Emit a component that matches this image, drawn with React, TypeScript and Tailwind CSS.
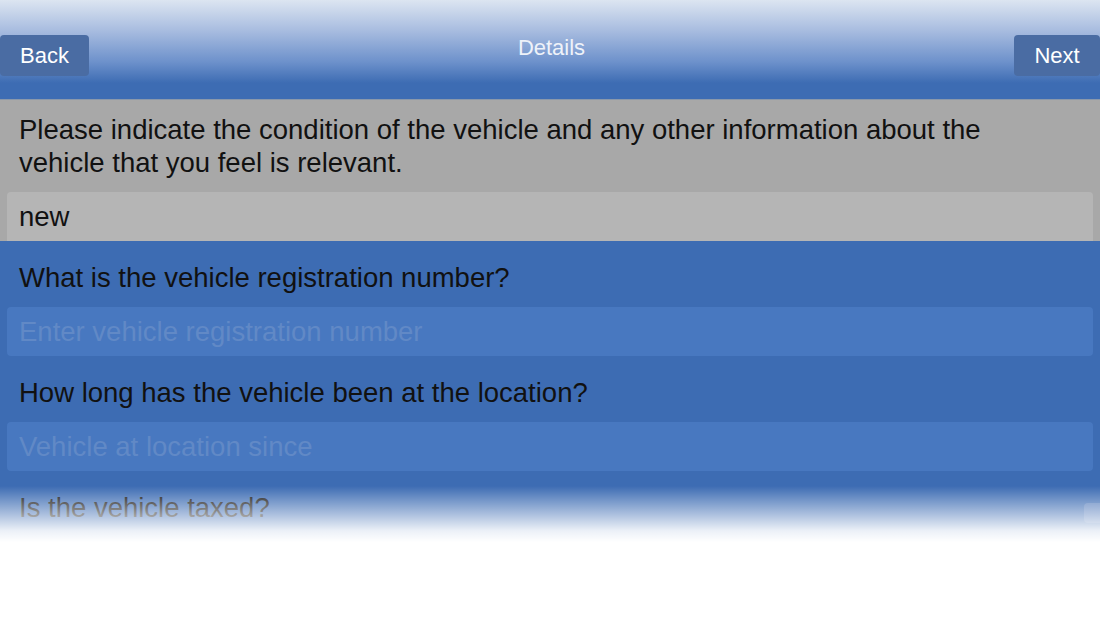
import React from "react";

const font = { fontFamily: '"Helvetica Neue", "Liberation Sans", Arial, sans-serif' };

function Question({ text }: { text: string }) {
  return <div className="h-[66px] px-[19px] pt-[20px] text-[27.5px] leading-[34px] text-[#111]">{text}</div>;
}

function Field({ placeholder }: { placeholder: string }) {
  return (
    <div className="mx-[7px] h-[49px] rounded-[4px] bg-[#4878c0] flex items-center px-[12px] text-[27.5px] text-[#6189c6]">
      {placeholder}
    </div>
  );
}

export default function App() {
  return (
    <div className="relative w-[1100px] h-[618px] overflow-hidden bg-white" style={font}>
      <div className="h-[99px] bg-[linear-gradient(to_bottom,#dce5f1_0px,#a9bde0_30px,#6d91cb_62px,#3d6cb3_83px,#3d6cb3_99px)] relative flex items-start justify-between">
        <button className="mt-[35px] w-[89px] h-[41px] rounded-[4px] bg-[#4a6ca3] text-white text-[22px] flex items-center justify-center">
          Back
        </button>
        <div className="mt-[31px] text-[22px] font-light text-[#eef2f9]">Details</div>
        <button className="mt-[35px] w-[86px] h-[41px] rounded-[4px] bg-[#4a6ca3] text-white text-[22px] flex items-center justify-center">
          Next
        </button>
      </div>
      <div className="bg-[#a8a8a8] border-t border-[#8a98ab]">
        <div className="h-[92px] pl-[19px] pr-[60px] pt-[13px] text-[27.5px] leading-[33px] text-[#111]">
          Please indicate the condition of the vehicle and any other information about the vehicle that you feel is relevant.
        </div>
        <div className="mx-[7px] h-[49px] rounded-t-[4px] bg-[#b5b5b5] flex items-center px-[12px] text-[27.5px] text-[#111]">
          new
        </div>
      </div>
      <div className="bg-[#3d6cb3] pb-[60px]">
        <Question text="What is the vehicle registration number?" />
        <Field placeholder="Enter vehicle registration number" />
        <Question text="How long has the vehicle been at the location?" />
        <Field placeholder="Vehicle at location since" />
        <div className="flex justify-between items-start">
          <Question text="Is the vehicle taxed?" />
          <div className="mt-[32px] w-[16px] h-[20px] rounded-l-[4px] bg-[#5a80bd]" />
        </div>
      </div>
      <div className="absolute left-0 right-0 top-[486px] h-[56px] bg-[linear-gradient(to_bottom,rgba(255,255,255,0)_0%,rgba(255,255,255,0.45)_40%,rgba(255,255,255,0.9)_80%,#ffffff_100%)]" />
      <div className="absolute left-0 right-0 top-[542px] bottom-0 bg-white" />
    </div>
  );
}
